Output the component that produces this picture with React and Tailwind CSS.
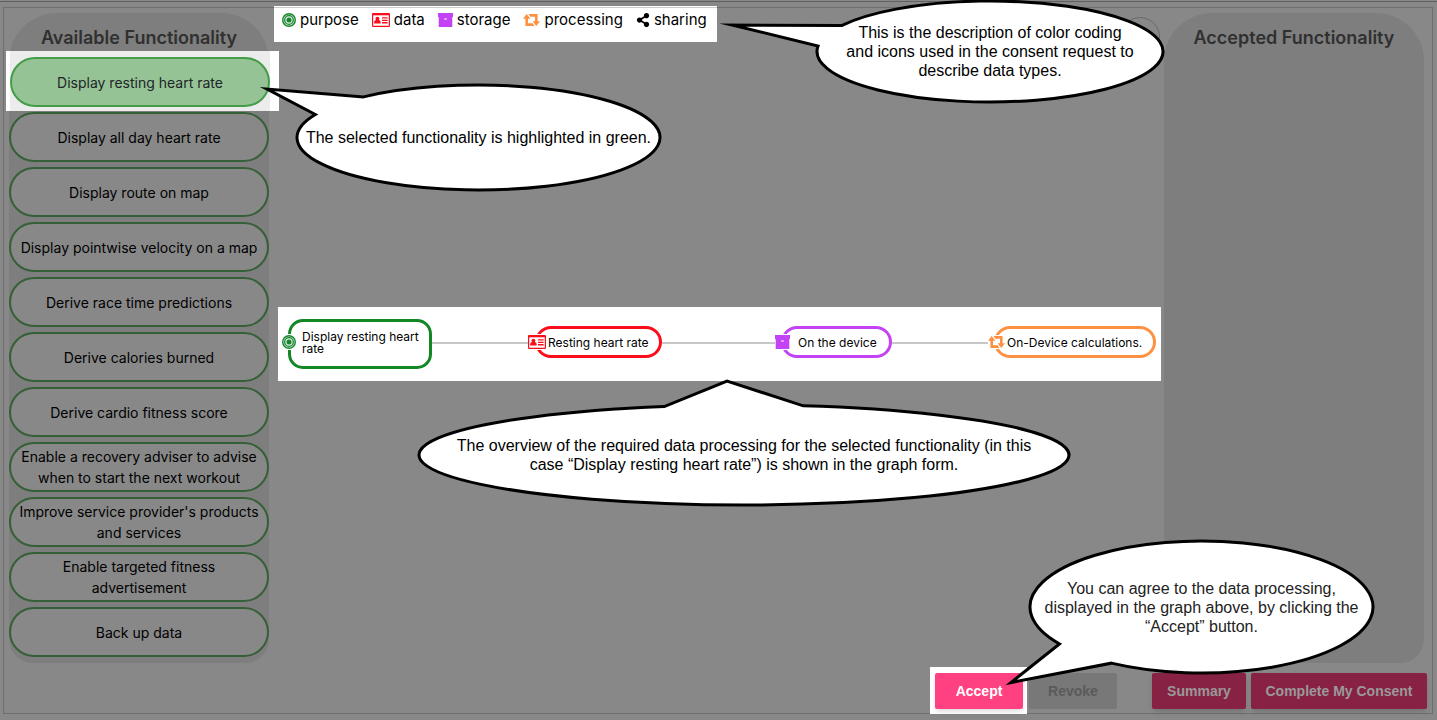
import React from "react";
import { FaShareAlt } from "react-icons/fa";

const functionality = [
  "Display all day heart rate",
  "Display route on map",
  "Display pointwise velocity on a map",
  "Derive race time predictions",
  "Derive calories burned",
  "Derive cardio fitness score",
  "Enable a recovery adviser to advise when to start the next workout",
  "Improve service provider's products and services",
  "Enable targeted fitness advertisement",
  "Back up data",
];

function PurposeIcon() {
  return (
    <svg viewBox="0 0 14 14" className="size-3.5 shrink-0" fill="none" aria-hidden="true">
      <circle cx="7" cy="7" r="6.3" fill="#dfeee6" stroke="#128724" strokeWidth="1.4" />
      <circle cx="7" cy="7" r="4.3" stroke="#1d8238" strokeWidth="1.3" />
      <circle cx="7" cy="7" r="2.5" fill="#128724" />
    </svg>
  );
}

function DataIcon() {
  return (
    <svg viewBox="0 0 18 14" className="h-3.5 w-[18px] shrink-0" fill="#fc0d1b" aria-hidden="true">
      <rect x="0.6" y="0.6" width="16.8" height="12.8" rx="0.6" fill="#fff" stroke="#fc0d1b" strokeWidth="1.2" />
      <rect x="0.5" y="0.5" width="17" height="1.8" />
      <circle cx="5.4" cy="5.6" r="1.9" />
      <path d="M2.200 10.600V9.200C2.200 7.800 3.200 7 4.200 7h2.400c1 0 2 .8 2 2.200v1.400z" />
      <path d="M10 4.200h5.600v1.400H10zM10 6.700h5.600v1.300H10zM10 9.100h5.600v1.400H10z" />
    </svg>
  );
}

function StorageIcon() {
  return (
    <svg viewBox="0 0 15 14" className="h-3.5 w-[15px] shrink-0" fill="#c442f5" aria-hidden="true">
      <path d="M0 0h15v4H0zM.7 4h13.600v10H.7z" />
      <rect x="6" y="5.6" width="3" height="1" rx="0.5" fill="#fff" />
    </svg>
  );
}

function ProcessingIcon() {
  return (
    <svg viewBox="0 0 17 12" className="h-3 w-[17px] shrink-0" fill="#fd9141" aria-hidden="true">
      <path d="M3.700 0L7.400 4.700H5V9.200h4.600L11.600 12H2.400V4.700H0z" />
      <path d="M13.300 12L9.600 7.300H12V2.800H7.400L5.400 0h9.200V7.300H17z" />
    </svg>
  );
}

function SpeechBubble({ size, rx, ry, tip, start, end, className, children }) {
  const at = (deg) => {
    const a = (deg * Math.PI) / 180;
    return `${rx + rx * Math.cos(a)} ${ry + ry * Math.sin(a)}`;
  };
  const d = `M${at(start)} A${rx} ${ry} 0 1 1 ${at(end)} L${tip[0]} ${tip[1]} Z`;
  return (
    <div role="note" className={`absolute z-10 flex items-center justify-center ${size} ${className}`}>
      <svg className="absolute inset-0 size-full overflow-visible" aria-hidden="true">
        <path d={d} fill="#fff" stroke="#000" strokeWidth="3" strokeMiterlimit="20" />
      </svg>
      <p className="relative text-center font-['Liberation_Sans',Arial,sans-serif] text-base leading-[19px] whitespace-nowrap">
        {children}
      </p>
    </div>
  );
}

function LegendItem({ icon, children }) {
  return (
    <li className="flex items-center gap-1">
      {icon}
      {children}
    </li>
  );
}

function Node({ icon, className, iconClass, children }) {
  return (
    <div className={`relative shrink-0 border-[3px] text-xs leading-3 ${className}`}>
      <span className={`absolute flex bg-white py-px ${iconClass}`}>{icon}</span>
      {children}
    </div>
  );
}

function Edge({ className }) {
  return <div className={`mb-0.5 h-0.5 bg-[#c8c8c8] ${className}`} />;
}

export default function App() {
  return (
    <div className="min-h-screen overflow-hidden bg-[#888] font-['Inter',sans-serif] text-black">
      <div className="h-[5px] border-t border-[#888]">
        <div className="h-px bg-[#606060]" />
      </div>
      <div className="pt-0.5 pr-1 pb-[5px] pl-[3px]">
        <main className="border border-[#6f6f6f]">
          <div className="flex pr-2 pl-[5px]">
            <aside className="mt-[5px] h-[650px] w-[260px] shrink-0 rounded-t-[48px] rounded-b-3xl bg-[#7e7e7e]">
              <h2 className="h-11 pt-[11px] text-center text-lg leading-7 font-semibold text-[#303030]">
                Available Functionality
              </h2>
              <ul className="flex flex-col gap-[5px] text-sm leading-[21px]">
                <li className="relative">
                  <div className="absolute -top-1.5 -left-[3px] h-[60px] w-[273px] bg-white px-1">
                    <div className="h-full w-[260px] bg-[#ececec]" />
                  </div>
                  <button className="relative ml-px h-[50px] w-full rounded-full border-2 border-[#449c48] bg-[#96c396] text-[#212529]">
                    Display resting heart rate
                  </button>
                  <SpeechBubble
                    size="h-[105px] w-[363px]"
                    rx={181.5}
                    ry={52.5}
                    start={230.7}
                    end={206}
                    tip={[-30, 4]}
                    className="top-7 left-72"
                  >
                    The selected functionality is highlighted in green.
                  </SpeechBubble>
                </li>
                {functionality.map((name) => (
                  <li key={name}>
                    <button className="h-[50px] w-full rounded-full border-2 border-[#356037] bg-[#888] px-1.5">
                      {name}
                    </button>
                  </li>
                ))}
              </ul>
            </aside>

            <section className="min-w-0 flex-1 pr-[3px] pl-[5px]">
              <div className="relative">
                <div className="relative -mt-0.5 h-9 w-[443px] bg-white">
                  <div className="absolute inset-x-0 top-px h-px bg-[#ccc]" />
                  <ul className="flex gap-[13px] pt-0.5 pl-2 text-[15px] leading-6">
                    <LegendItem icon={<PurposeIcon />}>purpose</LegendItem>
                    <LegendItem icon={<DataIcon />}>data</LegendItem>
                    <LegendItem icon={<StorageIcon />}>storage</LegendItem>
                    <LegendItem icon={<ProcessingIcon />}>processing</LegendItem>
                    <LegendItem icon={<FaShareAlt className="size-3.5" aria-hidden="true" />}>sharing</LegendItem>
                  </ul>
                  <SpeechBubble
                    size="h-[101px] w-[346px]"
                    rx={173}
                    ry={50.5}
                    start={210.9}
                    end={186.3}
                    tip={[-85, 24]}
                    className="-top-[5px] left-[543px]"
                  >
                    This is the description of color coding
                    <br />
                    and icons used in the consent request to
                    <br />
                    describe data types.
                  </SpeechBubble>
                </div>
                <button aria-label="Help" className="absolute top-[11px] right-px size-10 rounded-full border border-[#6a6a6a]" />
              </div>

              <div className="relative mt-[265px] ml-1 flex h-[74px] items-center bg-white pr-[5px] pl-2.5">
                <Node
                  icon={<PurposeIcon />}
                  className="h-[50px] w-36 rounded-[15px] border-[#128724] pt-[9px] pl-[11px]"
                  iconClass="top-3 -left-[9px]"
                >
                  Display resting heart rate
                </Node>
                <Edge className="flex-[103]" />
                <Node
                  icon={<DataIcon />}
                  className="mb-1 h-8 w-[127px] rounded-2xl border-[#fc0d1b] pt-2 pl-2.5"
                  iconClass="top-[5px] -left-2.5"
                >
                  Resting heart rate
                </Node>
                <Edge className="flex-[119]" />
                <Node
                  icon={<StorageIcon />}
                  className="mb-1 h-8 w-[111px] rounded-2xl border-[#c442f5] pt-2 pl-3.5"
                  iconClass="top-[5px] -left-[9px]"
                >
                  On the device
                </Node>
                <Edge className="flex-[102]" />
                <Node
                  icon={<ProcessingIcon />}
                  className="mb-1 h-8 w-[162px] rounded-2xl border-[#fd9141] pt-2 pl-2.5"
                  iconClass="top-1.5 -left-[9px]"
                >
                  On-Device calculations.
                </Node>
                <SpeechBubble
                  size="h-[100px] w-[650px]"
                  rx={325}
                  ry={50}
                  start={280.5}
                  end={255.8}
                  tip={[308, -24]}
                  className="top-[98px] left-[141px]"
                >
                  The overview of the required data processing for the selected functionality (in this
                  <br />
                  case “Display resting heart rate”) is shown in the graph form.
                </SpeechBubble>
              </div>
            </section>

            <aside className="mt-[5px] h-[650px] w-[260px] shrink-0 rounded-t-[48px] rounded-b-3xl bg-[#7e7e7e]">
              <h2 className="pt-[11px] text-center text-lg leading-7 font-semibold text-[#303030]">
                Accepted Functionality
              </h2>
            </aside>
          </div>

          <footer className="mt-1 -mb-px flex justify-end gap-[5px] pr-[5px] font-['Liberation_Sans',Arial,sans-serif] text-sm font-bold">
            <div className="relative h-[47px] bg-white pt-1.5 pr-1 pl-[5px]">
              <button className="h-9 w-22 rounded-xs bg-[#ff4081] text-white shadow-md">Accept</button>
              <SpeechBubble
                size="h-[132px] w-[343px]"
                rx={171.5}
                ry={66}
                start={145.9}
                end={121.7}
                tip={[-19, 141.5]}
                className="-top-[126px] left-[100px] font-normal text-[#222]"
              >
                You can agree to the data processing,
                <br />
                displayed in the graph above, by clicking the
                <br />
                “Accept” button.
              </SpeechBubble>
            </div>
            <button disabled className="mt-1.5 -ml-[3px] h-9 w-22 rounded-xs bg-[#787878] text-[#5a5a5a]">
              Revoke
            </button>
            <button className="mt-1.5 ml-[30px] h-9 w-[94px] rounded-xs bg-[#882244] text-[#999] shadow-md">
              Summary
            </button>
            <button className="mt-1.5 h-9 w-44 rounded-xs bg-[#882244] text-[#999] shadow-md">
              Complete My Consent
            </button>
          </footer>
        </main>
      </div>
    </div>
  );
}
